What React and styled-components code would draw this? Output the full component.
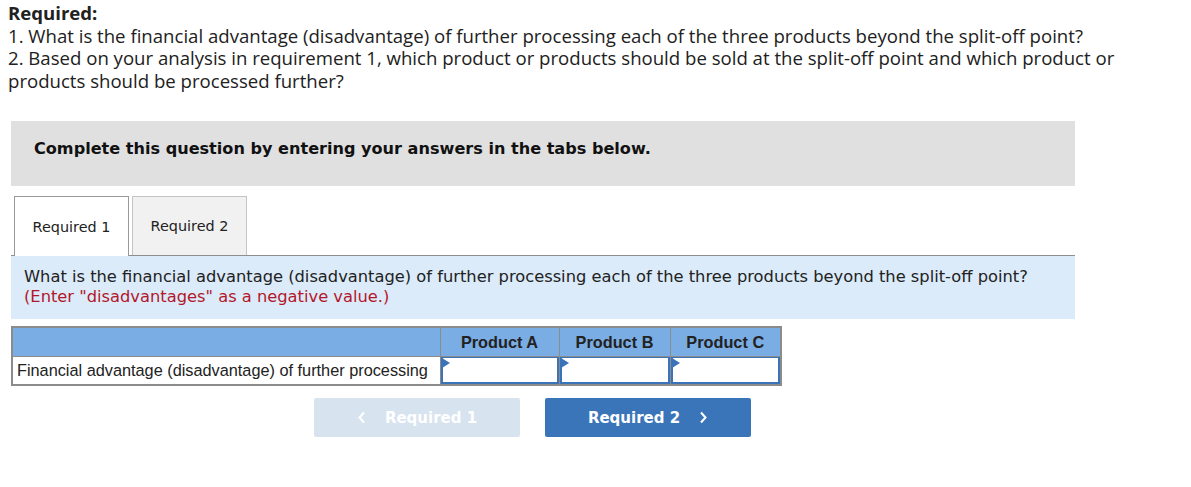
import React from 'react';
import styled, { createGlobalStyle } from 'styled-components';

const GlobalStyle = createGlobalStyle`
  body {
    margin: 0;
    background: #ffffff;
  }
`;

const Page = styled.div`
  width: 1191px;
  height: 487px;
  padding: 2px 8px 0 8px;
  box-sizing: border-box;
  overflow: hidden;
`;

const Intro = styled.div`
  font-family: "Open Sans", Lato, sans-serif;
  font-size: 18.6px;
  line-height: 22.5px;
  color: #212121;
`;

const Strong = styled.div`
  font-weight: 700;
`;

const Panel = styled.div`
  width: 1064px;
  margin: 29px 0 0 3px;
  font-family: "DejaVu Sans", Verdana, sans-serif;
`;

const Banner = styled.div`
  background: #e0e0e0;
  height: 65px;
  box-sizing: border-box;
  padding: 18px 0 0 23px;
  font-size: 16.1px;
  line-height: 19px;
  font-weight: 700;
  color: #111;
`;

const Tabs = styled.div`
  display: flex;
  align-items: flex-end;
  gap: 3px;
  margin-top: 10px;
  padding-left: 3px;
  border-bottom: 1px solid #8e8e8e;
`;

const Tab = styled.div`
  width: 115px;
  height: ${p => (p.$active ? '60px' : '59px')};
  box-sizing: border-box;
  display: flex;
  align-items: center;
  justify-content: center;
  font-size: 14.4px;
  color: #222;
  border: 1px solid ${p => (p.$active ? '#999' : '#c4c4c4')};
  border-bottom: none;
  background: ${p => (p.$active ? '#fff' : '#f1f1f1')};
  margin-bottom: ${p => (p.$active ? '-1px' : '0')};
`;

const Info = styled.div`
  background: #dbebf9;
  padding: 11px 13px 12px;
  font-size: 16.3px;
  line-height: 20px;
  color: #222;
`;

const Note = styled.div`
  color: #b3172b;
`;

const Table = styled.table`
  margin-top: 7px;
  width: 769px;
  table-layout: fixed;
  border-collapse: collapse;
  font-family: "Liberation Sans", Arial, sans-serif;
  font-size: 16.3px;
  border: 2px solid #8b8b8b;
`;

const Th = styled.th`
  background: #7aade4;
  height: 28px;
  padding: 0;
  font-weight: 700;
  color: #222;
  border: 1px solid #8b8b8b;
`;

const Label = styled.td`
  height: 27px;
  padding: 0 4px;
  color: #222;
  border: 1px solid #8b8b8b;
  white-space: nowrap;
`;

const Cell = styled.td`
  padding: 0;
  border: 1px solid #8b8b8b;
`;

const Input = styled.div`
  height: 24px;
  border: 2px solid #3b73b9;
  border-top-width: 1px;
  background: #fff;
  position: relative;

  &::before {
    content: '';
    position: absolute;
    left: -1px;
    top: 0;
    border-left: 8px solid #3b73b9;
    border-top: 5px solid transparent;
    border-bottom: 5px solid transparent;
  }
`;

const Nav = styled.div`
  display: flex;
  gap: 25px;
  margin: 12px 0 0 303px;
`;

const NavButton = styled.div`
  width: 206px;
  height: 39px;
  border-radius: 2px;
  display: flex;
  align-items: center;
  justify-content: center;
  gap: 19px;
  font-size: 15px;
  font-weight: 700;
  color: #fff;
  background: ${p => (p.$disabled ? '#d8e3f0' : '#3a75ba')};
`;

const Chevron = ({ dir }) => (
  <svg width="9" height="13" viewBox="0 0 9 13">
    <path
      d={dir === 'left' ? 'M7 1.5 L2.5 6.5 L7 11.5' : 'M2 1.5 L6.5 6.5 L2 11.5'}
      fill="none"
      stroke="#fff"
      strokeWidth="2"
    />
  </svg>
);

export default function App() {
  return (
    <Page>
      <GlobalStyle />
      <Intro>
        <Strong>Required:</Strong>
        <div>1. What is the financial advantage (disadvantage) of further processing each of the three products beyond the split-off point?</div>
        <div>2. Based on your analysis in requirement 1, which product or products should be sold at the split-off point and which product or products should be processed further?</div>
      </Intro>
      <Panel>
        <Banner>Complete this question by entering your answers in the tabs below.</Banner>
        <Tabs>
          <Tab $active>Required 1</Tab>
          <Tab>Required 2</Tab>
        </Tabs>
        <Info>
          What is the financial advantage (disadvantage) of further processing each of the three products beyond the split-off point?
          <Note>(Enter "disadvantages" as a negative value.)</Note>
        </Info>
        <Table>
          <colgroup>
            <col style={{ width: 428 }} />
            <col style={{ width: 119 }} />
            <col style={{ width: 111 }} />
            <col style={{ width: 111 }} />
          </colgroup>
          <thead>
            <tr>
              <Th />
              <Th>Product A</Th>
              <Th>Product B</Th>
              <Th>Product C</Th>
            </tr>
          </thead>
          <tbody>
            <tr>
              <Label>Financial advantage (disadvantage) of further processing</Label>
              <Cell><Input /></Cell>
              <Cell><Input /></Cell>
              <Cell><Input /></Cell>
            </tr>
          </tbody>
        </Table>
        <Nav>
          <NavButton $disabled><Chevron dir="left" />Required 1</NavButton>
          <NavButton>Required 2<Chevron dir="right" /></NavButton>
        </Nav>
      </Panel>
    </Page>
  );
}
